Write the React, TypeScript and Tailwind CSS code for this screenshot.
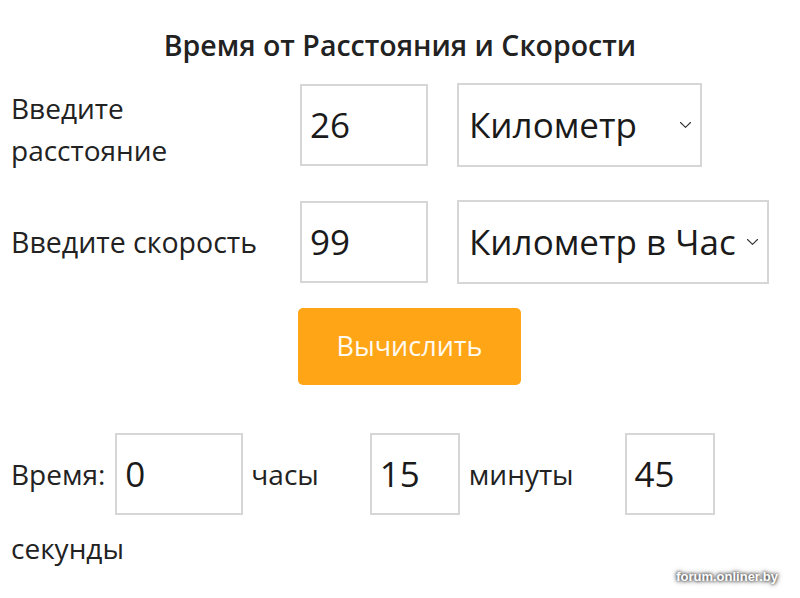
import React from 'react';

const font = { fontFamily: '"Open Sans", "Noto Sans", sans-serif' };

const Chevron: React.FC = () => (
    <svg width="13" height="8" viewBox="0 0 13 8" fill="none" className="shrink-0">
        <path d="M1.5 1.5 L6.5 6.3 L11.5 1.5" stroke="#333" strokeWidth="1.1" strokeLinecap="round" strokeLinejoin="round" />
    </svg>
);

const Box: React.FC<{ value: string; w: string }> = ({ value, w }) => (
    <div className={`${w} h-[82px] border-2 border-[#d6d6d6] bg-white flex items-center pl-[8px] text-[35px] text-[#1a1a1a] shrink-0`}>
        {value}
    </div>
);

const Select: React.FC<{ label: string; w: string }> = ({ label, w }) => (
    <div className={`${w} h-[84px] border-2 border-[#d6d6d6] bg-white flex items-center justify-between pl-[10px] pr-[8px] text-[35px] text-[#1a1a1a] shrink-0 whitespace-nowrap`}>
        <span>{label}</span>
        <Chevron />
    </div>
);

export default function App() {
    return (
        <div className="w-[800px] h-[598px] bg-white relative overflow-hidden text-[#222]" style={font}>
            <h1 className="pt-[27px] text-center text-[28.5px] leading-[36px] font-semibold text-[#222]">
                Время от Расстояния и Скорости
            </h1>

            {/* Distance */}
            <div className="flex items-start h-[84px] px-[11px] mt-[20px]">
                <div className="w-[289px] mt-[4px] text-[28px] leading-[42px]">
                    Введите<br />расстояние
                </div>
                <div className="mt-[1px]"><Box value="26" w="w-[128px]" /></div>
                <div className="w-[29px]" />
                <Select label="Километр" w="w-[245px]" />
            </div>

            {/* Speed */}
            <div className="flex items-center px-[11px] mt-[33px]">
                <div className="w-[289px] text-[28.5px] leading-[42px]">Введите скорость</div>
                <Box value="99" w="w-[128px]" />
                <div className="w-[29px]" />
                <Select label="Километр в Час" w="w-[312px]" />
            </div>

            <div className="pl-[298px] mt-[24px]">
                <button className="w-[223px] h-[77px] rounded-[5px] bg-[#ffa516] text-[#fffaf0] text-[27px]">
                    Вычислить
                </button>
            </div>

            {/* Result */}
            <div className="flex flex-wrap items-center px-[11px] mt-[48px] gap-y-[12px] text-[28px] leading-[42px]">
                <span>Время:</span>
                <div className="ml-[10px]"><Box value="0" w="w-[128px]" /></div>
                <span className="ml-[8px]">часы</span>
                <div className="ml-[51px]"><Box value="15" w="w-[90px]" /></div>
                <span className="ml-[9px]">минуты</span>
                <div className="ml-[51px]"><Box value="45" w="w-[90px]" /></div>
                <span className="basis-full">секунды</span>
            </div>

            <div
                className="absolute right-[19px] bottom-[12px] px-[3px] text-[13px] font-bold text-white [text-shadow:0_0_3px_#333,0_0_4px_#777,0_0_6px_#999]"
                style={{ fontFamily: '"Liberation Sans", Arial, sans-serif' }}
            >
                forum.onliner.by
            </div>
        </div>
    );
}
